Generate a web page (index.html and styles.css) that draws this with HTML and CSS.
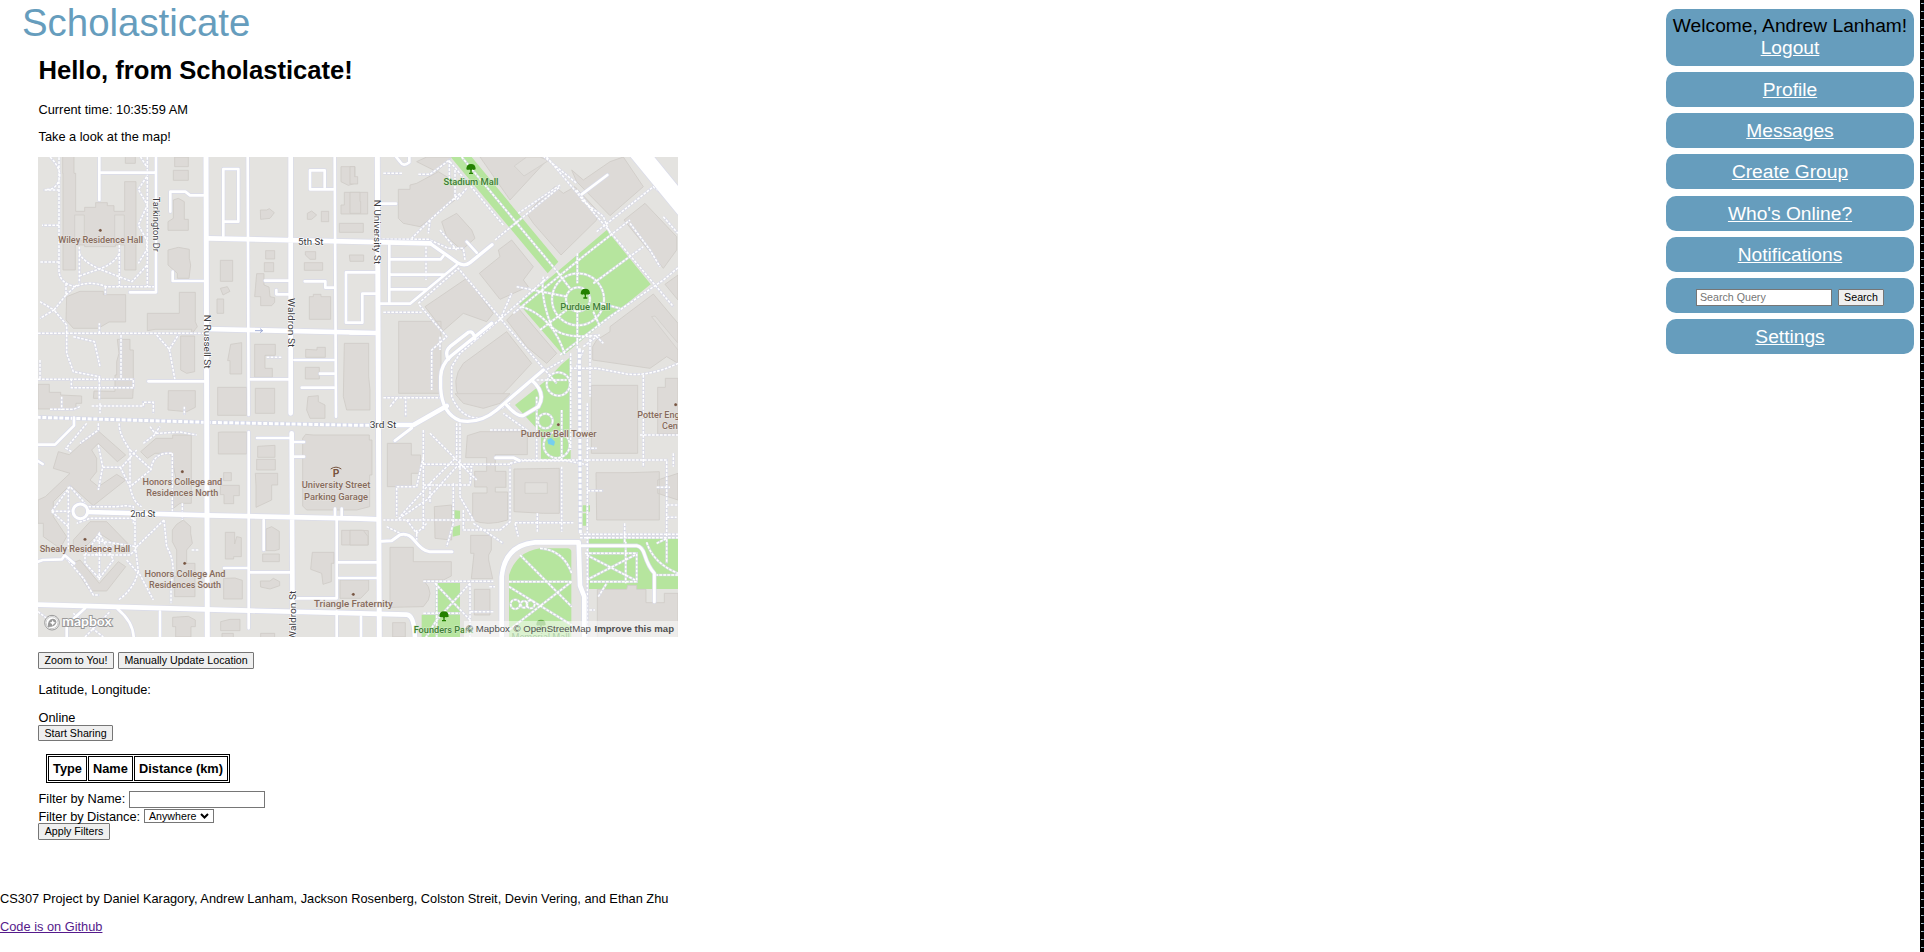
FILE: index.html
```html
<!DOCTYPE html>
<html lang="en">
<head>
<meta charset="utf-8">
<title>Scholasticate</title>
<link rel="stylesheet" href="styles.css">
</head>
<body>
<div class="page">
<main class="content">
<header class="brand">Scholasticate</header>
<section class="home">
<h1>Hello, from Scholasticate!</h1>
<p class="clock">Current time: 10:35:59 AM</p>
<p class="lead">Take a look at the map!</p>
<div class="map">
<svg class="map-canvas" viewBox="24 21 1920 1440" width="640" height="480">
<defs>
<g id="roads">
<path style="--w:15px" d="M528 10L532 1475M1042 10L1048 1475"/>
<path style="--w:14px" d="M782 10V790M785 850L788 1475M535 265L1200 280M528 537L1042 549M175 1086L535 1096L990 1106L1045 1108M20 1364L660 1382L990 1390L1130 1394Q1155 1396 1155 1475"/>
<path style="--w:8px" d="M653 10L656 795M656 846V1435M914 10L918 800M920 1110V1345H795M920 1385V1475"/>
<path style="--w:8px" d="M208 10V150M214 68H374M378 10V427H300M421 185V125H466L480 136H520M428 365V393H520M580 258V57H625V215H580M910 118H840V61H884V112M705 392H778M776 433H739V420M824 394H886V413H912M355 694H525M661 688H778M793 630H912M870 671H912M815 713H912M948 518V367H1042M948 518H997V431H1042M960 550H1042"/>
<path style="--w:8px" d="M1090 10L1110 35Q1120 52 1138 37V10M1052 161H1098M1078 285V457M1050 461H1140L1280 345M1083 328H1232L1240 318M1083 374H1240M1083 418H1190M1310 275L1340 308M1655 133L1732 75"/>
<path style="--w:10px" d="M1200 280L1285 340Q1305 350 1320 338L1386 284M1385 520L1263 618Q1233 645 1232 680V715Q1236 790 1290 812Q1350 822 1400 780L1540 660M1255 628Q1243 605 1260 590L1315 547Q1330 540 1335 567M1505 690Q1550 730 1525 770L1480 797Q1460 800 1430 765"/>
<path style="--w:8px" d="M24 884H75L132 827V803M24 933L38 942M24 1235L38 1230L96 1228L104 1216L132 1240M681 864H782M793 876H822M793 920H822M701 1110V1200M582 1254H655M661 1267H780M924 1237H1040M924 1284H1040M915 1076V1100M935 1076V1100M165 1375L110 1425V1461M263 1377Q315 1420 311 1475M390 1385V1475M993 1400V1475"/>
<path style="--w:14px" d="M1080 825H1150L1250 768M1642 1177H1515Q1425 1185 1415 1280V1475M1646 1177L1650 1307L1663 1340V1475"/>
<path style="--w:9px" d="M1095 872L1145 834M1056 1174L1085 1172L1110 1154Q1135 1148 1152 1170Q1180 1206 1200 1205H1266M1397 923H1450L1468 932M1655 1187H1820Q1837 1190 1844 1215Q1855 1250 1873 1270V1355"/>
<path style="--w:55px" d="M1812 -10L1980 195"/>
</g>
<g id="walks">
<path d="M87 10V365Q90 400 135 410Q180 390 228 410H376M88 120H40M87 226H36M87 336H30M60 21Q100 60 85 95Q75 120 50 118M352 21V410M325 10L350 50M350 80L325 118L352 165L325 225L350 270V300L325 340M148 290V400M268 285V410M148 310Q160 335 208 357L306 395L352 345M148 378L208 357Q255 340 268 310M30 455L72 480L30 505M108 400V435L72 480L110 525V610L130 665L208 680V750M108 435L140 405M226 410V435M24 550H525M208 550V520M130 560L193 575L210 650M273 555V685M24 688H310V713H124V690M380 555L418 598L445 555M418 598L435 690M30 630V690M710 622H755"/>
<path d="M60 778H130L150 770M185 768H340V757H370V790M210 760V790M95 740V780M463 770V795M170 820L108 895L125 905M205 820V840L150 880M268 820Q265 850 300 900V1010Q310 1060 335 1070M360 830L375 850L390 830M340 880L380 850L450 846L500 855M205 885L218 950L205 1020M218 952H275L320 900M425 910Q370 905 362 960L300 1010L270 950M300 900L365 960M427 910V1090M115 1010V1200M65 1084L120 1010L165 1060M65 1084H125M65 1084L115 1130M175 1070H260Q290 1065 310 1070V1120M310 1105H180L140 1120M315 1105V1180L325 1265L370 1350M325 1265Q310 1320 265 1350M402 1110L320 1190L190 1170M402 1110L410 1190Q440 1240 423 1300V1360M457 1060V1110M100 1215L160 1285L190 1335H208M208 1150V1290M160 1215H300L320 1195M165 1220V1240L208 1285L250 1230L208 1150L165 1215M195 1215L250 1185M290 1230L325 1270M24 1385L70 1420M165 1461L240 1385M130 1390L220 1461M485 1200H505"/>
<path d="M1060 70H1116M1165 73H1200L1245 40L1258 30V90M1260 35L1420 225M1290 130L1200 210L1145 265M1275 60V150M1045 268H1195L1255 295H1300L1305 330M1200 210L1195 250M1230 240L1280 300M1310 115L1280 150M1395 270L1590 110M1295 21L1590 375M1550 21L1930 470M1530 10L1640 100M1655 150L1720 200L1740 250M1590 105L1465 190M1700 245L1870 110L1920 150M1640 120L1690 185M1900 200L1944 250M1555 380L1410 508M1165 460L1285 355L1440 540L1580 700M1168 465L1250 560L1205 600V720M1060 487H1175M1230 560V600M1188 290V390M1410 508L1290 610L1265 650V740Q1300 820 1370 800L1440 760M1410 510L1445 430M1450 490L1665 315L1800 210M1475 470Q1570 500 1605 615M1460 410L1610 440M1590 615L1740 500L1900 390L1960 340M1642 310V400M1642 480V600M1690 400L1840 290M1710 460L1770 475M1690 485L1710 530M1540 380Q1530 440 1565 530Q1600 570 1710 555M1530 540L1610 480M1585 370L1620 415M1680 555V740M1660 600L1640 650M1620 655H1700L1790 672Q1860 680 1944 640M1840 675V950M1622 610V900M1530 670L1600 630M1520 690H1610M1660 590L1700 560L1720 580M1800 220L1860 300L1890 350"/>
<path d="M1060 743H1240M1127 740V800M1080 770L1100 745M1180 840V1140M1200 850L1340 990M1180 920L1160 1010H1100V1100M1180 1005H1320L1325 950H1280L1190 1050L1100 1110M1280 820V920L1200 1000L1110 1100M1290 820V1040L1330 1110H1060M1180 943H1380L1445 943M1200 1000V1060M1270 1000V1120L1250 1190M1130 1110L1160 1150L1190 1120M1070 1130L1130 1160M1160 1140V1185M1180 1294H1390M1300 1080V1140H1410L1440 1115V1000V950M1330 1120L1420 1180M1455 1118H1630M1455 1120L1465 1160M1522 1090V1145M1595 950V1145M1440 940L1475 932H1610L1675 945M1470 930H1910V1160M1595 780V930M1520 830V930H1550M1380 840H1490L1420 790M1520 740V840M1672 760V1150M1672 1022H1720M1672 895H1700M1784 1120V1180M1650 1153H1944M1650 1163H1944M1672 1160V1475M1910 1065H1944M1880 1012H1920M1910 1102H1940M1830 855H1944M1930 910V950M1320 1300V1475M1215 1300L1320 1410M1320 1300L1220 1410L1180 1475M1180 1390H1290M1220 1300V1460M1322 1385H1390M1378 1310H1395"/>
<path d="M1437 1295H1625M1470 1215L1625 1370M1625 1295L1437 1440M1530 1195Q1600 1200 1625 1270M1437 1310L1625 1425M1665 1210H1820V1295H1680M1670 1215L1815 1290M1670 1290L1815 1215M1787 1175V1300M1850 1177Q1870 1240 1944 1270M1880 1180L1910 1165V1240M1944 1275H1870M1678 1380H1695M1705 1340L1730 1300"/>
<ellipse cx="1644" cy="448" rx="78" ry="78"/><circle cx="1644" cy="448" r="36"/><circle cx="1585" cy="702" r="35"/><circle cx="1546" cy="813" r="22"/><circle cx="1580" cy="885" r="39"/><circle cx="1456" cy="1363" r="14"/><circle cx="1482" cy="1363" r="10"/><circle cx="1502" cy="1363" r="12"/>
</g>
<g id="tree"><path d="M-14 2Q-14-14 0-14Q14-14 14 2L8 4Q4 1 2 5V12H6V16H-6V12H-2V5Q-5 1-9 4Z"/></g>
</defs>
<rect class="land" x="24" y="21" width="1920" height="1440"/>
<g class="park">
<path d="M1262 21H1325L1585 335L1553 370ZM1730 240L1862 403L1600 616L1467 462ZM1595 643L1622 620V927H1533V850L1455 765L1550 690Z"/>
<path d="M1268 1080L1290 1082V1110L1268 1105ZM1268 1132L1290 1125V1155L1268 1160ZM1658 1066H1680V1085H1658ZM1658 1090H1674V1127H1658ZM1218 1299H1290V1390V1475H1175V1394H1216ZM1437 1475V1275Q1460 1205 1530 1195H1614Q1624 1197 1624 1205V1475ZM1677 1163H1944V1317H1677Z"/>
</g>
<g class="building">
<path d="M98 10H132V70H137V184H164V172H197V158H232V167H252V184H284V95H318V360H284V285H256V290H164V285H136V360H99V70H98ZM286 10H316V40H286ZM434 21H475V50H434ZM430 61H475V91H430ZM430 150L445 145L463 155V208H475V241H414V215L430 205ZM414 300L445 292L478 298V325L482 345L477 385H442V370L414 345ZM110 440L150 424H220V434H287V516H237L205 535H130L108 510ZM352 490H448V427H496V515L502 530L485 552V538H375L352 542ZM452 558H494V665L470 670L452 660ZM262 568H300V600H310V710L308 745H190L192 723L255 724V675H260V635L267 610ZM24 703H58V727H92V735L155 738V760H138V777H24Z"/>
<path d="M691 180H710L718 176L733 188L720 205L692 208ZM832 190L845 183L860 195L845 208H832ZM874 184H896V215H874ZM933 50H975V100L955 106L933 95ZM943 127H1013V192H933V165H943ZM928 220H1000V247H928ZM707 302H734V327H707ZM703 338H731V365H703ZM826 305H857V328H840L826 315ZM823 338H878V361H823ZM571 331H608V394H571ZM571 415L592 410L600 424L579 435ZM561 447H581V490H561ZM680 371H702V405L717 411L720 440L734 443V457L725 467H692V440H674ZM850 440V433H873V440H902V508H838V440ZM958 315H1001V334H960ZM943 580H1016V680L1020 720V780H950L940 740ZM602 583L635 578V672H600V632H593ZM674 583H736V616H705V655H727V682H674ZM827 598L861 600V592H886V622H827ZM826 652H868V687H826ZM563 712H650V796H563ZM676 715H734V790H676ZM415 722H496V772L470 785L414 780ZM834 740L865 737V755L885 765V805H840L830 780Z"/>
<path d="M565 847L575 846H650V912H565ZM683 889L735 886V922H683ZM680 928H736V960H680ZM676 970H743V1005H725V1050L678 1072V1008ZM581 968H604V992H581ZM571 1006H628V1037H611V1061H582V1034H571ZM827 853L850 855H1018V870H1026V975H1019V1070L980 1080H830L818 1068V865ZM46 1040L120 970L70 955L85 905L118 914L155 880L205 843L287 915L262 935L205 880L185 900L200 925V965L180 990L205 1010L260 973L287 990L190 1067L120 1005L70 1055V1100L110 1160L90 1195L40 1160V1120H24V1050ZM332 905L378 865H428V855H484V1060H450L430 1075V1015L440 995L422 910H375L352 925ZM130 1170L180 1115H230L293 1180L270 1190L208 1150L150 1205L130 1195ZM125 1240L150 1230L208 1300L265 1235L287 1250L230 1323H180ZM440 1123L460 1110L482 1130V1150L487 1180L470 1200V1240H495V1340H434V1280H440V1200L427 1175V1140Z"/>
<path d="M586 1147H614V1182L620 1160L634 1163V1220H611V1227H586ZM708 1137L725 1130L748 1144V1198L734 1202H708ZM698 1212H748V1235H698ZM847 1207H912V1240H904V1295L879 1303L875 1270L842 1258ZM581 1285L615 1284L637 1291V1347H581ZM691 1293H720L730 1285L749 1295V1307L720 1317L692 1311ZM572 1415L600 1408H630V1442H572ZM428 1402L475 1399L496 1410V1430H483V1461H437V1430H428ZM935 1141H990L1015 1142V1185H935ZM930 1290L978 1290H1016V1320L992 1345H930ZM576 1450H610V1470H576ZM692 1450H734V1470H692Z"/>
<path d="M960 50H974V80H983V102H960ZM960 127H990V155H992V190H960ZM1105 118H1140V105L1160 100L1225 65L1275 95V150L1170 230L1120 220L1105 205ZM1160 35L1190 21H1265L1220 65ZM1235 215L1280 190L1325 240L1335 265L1295 300L1250 260ZM1404 10H1530L1553 28L1440 150L1350 21ZM1490 190L1520 160L1575 110L1600 130L1635 110L1700 180V210L1593 315L1510 220ZM1625 60L1660 90L1740 35L1780 21L1840 110L1740 197L1640 95ZM1782 210L1845 160L1940 260V300L1900 355ZM1348 370L1410 320L1405 300L1445 270L1510 350L1480 390L1495 410L1410 448ZM1185 470L1310 385L1390 490L1370 515L1300 490L1240 542ZM1106 514H1233V730H1106ZM1300 640L1430 545L1505 640L1440 710L1400 750H1290Q1260 690 1300 640ZM1430 510L1465 475L1580 610L1550 640L1490 590ZM1688 590L1700 570L1740 545V530L1870 432L1944 520V640L1910 620L1860 655L1688 630ZM1684 706H1823V910H1684ZM1883 712H1906V685H1944V852H1883ZM1905 403L1944 375V450Z"/>
<path d="M1275 731H1440L1410 760L1360 775L1300 760ZM1072 880H1144V915H1172V970H1144V1010H1072ZM1312 857L1350 845H1384V845H1492V914H1396V964H1428V1012H1396V1026H1433V1110Q1370 1130 1328 1110V1029H1371V1011H1334V964H1370V923H1307ZM1452 957L1588 955V1090H1540L1452 1085ZM1698 968L1800 968L1888 965V1110H1700ZM1213 1070L1265 1065V1170L1215 1165ZM1080 1192H1150V1235H1264V1278L1240 1290H1180Q1220 1330 1180 1370L1080 1372ZM1322 1156H1384V1200L1376 1215V1230L1388 1286H1324L1332 1210H1322ZM1333 1318H1380V1395H1333ZM1702 1318H1790L1793 1306H1820V1318H1848V1358H1903V1330H1944V1475H1702ZM960 1141H1000L1014 1160V1185H960ZM1088 1418H1126V1461H1088ZM1883 990L1944 970V1050L1883 1030Z"/>
</g>
<g class="building-hole"><path d="M134 195H163V272H134ZM254 195H283V272H254ZM1485 998H1552V1030H1485ZM1865 500L1875 498L1944 580V600ZM1453 48L1482 78L1555 32L1530 21H1490Z"/></g>
<use class="walk-edge" href="#walks"/><use class="walk" href="#walks"/>
<g class="mall"><path d="M20 802L530 817L990 826L1060 825M1648 595L1651 1150"/></g>
<g class="mall-dash"><path d="M20 802L530 817L990 826L1060 825M1648 595L1651 1150"/></g>
<g class="road-edge"><use href="#roads"/><circle style="--w:9px" cx="151" cy="1084" r="22"/></g>
<g class="road"><use href="#roads"/><circle style="--w:9px" cx="151" cy="1084" r="22"/></g>
<path class="arrow" d="M675 542H698M690 536L698 542L690 548"/>
<path class="pond" d="M1552 870L1563 863L1575 875L1572 887L1555 882Z"/>
<g class="dots"><circle cx="211" cy="241" r="5"/><circle cx="457" cy="965" r="5"/><circle cx="165" cy="1168" r="5"/><circle cx="464" cy="1240" r="5"/><circle cx="970" cy="1333" r="5"/><circle cx="1585" cy="824" r="5"/><circle cx="1937" cy="764" r="5"/></g>
<g class="trees"><use href="#tree" x="1323" y="56"/><use href="#tree" x="1666" y="430"/><use href="#tree" x="1242" y="1398"/><use href="#tree" x="1533" y="1423" opacity=".5"/></g>
<g class="place">
<text x="212" y="279" textLength="255" lengthAdjust="spacingAndGlyphs">Wiley Residence Hall</text>
<text x="457" y="1004" textLength="239" lengthAdjust="spacingAndGlyphs">Honors College and</text><text x="457" y="1038" textLength="216" lengthAdjust="spacingAndGlyphs">Residences North</text>
<text x="165" y="1207" textLength="271" lengthAdjust="spacingAndGlyphs">Shealy Residence Hall</text>
<text x="465" y="1280" textLength="243" lengthAdjust="spacingAndGlyphs">Honors College And</text><text x="465" y="1313" textLength="216" lengthAdjust="spacingAndGlyphs">Residences South</text>
<text x="918" y="1015" textLength="206" lengthAdjust="spacingAndGlyphs">University Street</text><text x="918" y="1049" textLength="192" lengthAdjust="spacingAndGlyphs">Parking Garage</text>
<text x="970" y="1371" textLength="236" lengthAdjust="spacingAndGlyphs">Triangle Fraternity</text>
<text x="1586" y="862" textLength="228" lengthAdjust="spacingAndGlyphs">Purdue Bell Tower</text>
<text class="from-start" x="1822" y="803">Potter Engineering</text><text class="from-start" x="1896" y="837">Center</text>
</g>
<text class="parking" x="918" y="980">P</text><path class="parking-roof" d="M902 957Q918 946 934 957"/>
<g class="green">
<text x="1323" y="105" textLength="165" lengthAdjust="spacingAndGlyphs">Stadium Mall</text><text x="1666" y="479" textLength="151" lengthAdjust="spacingAndGlyphs">Purdue Mall</text><text x="1240" y="1448" textLength="178" lengthAdjust="spacingAndGlyphs">Founders Park</text><text x="1532" y="1471" textLength="175" lengthAdjust="spacingAndGlyphs" opacity=".6">Memorial Mall</text>
</g>
<g class="street">
<text x="842" y="284" textLength="76" lengthAdjust="spacingAndGlyphs">5th St</text><text x="339" y="1101" textLength="75" lengthAdjust="spacingAndGlyphs">2nd St</text><text x="1059" y="834" textLength="80" lengthAdjust="spacingAndGlyphs">3rd St</text>
<text transform="translate(368 223) rotate(90)" textLength="165" lengthAdjust="spacingAndGlyphs">Tarkington Dr</text>
<text transform="translate(521 575) rotate(90)" textLength="161" lengthAdjust="spacingAndGlyphs">N Russell St</text>
<text transform="translate(775 518) rotate(90)" textLength="148" lengthAdjust="spacingAndGlyphs">Waldron St</text>
<text transform="translate(1033 246) rotate(90)" textLength="193" lengthAdjust="spacingAndGlyphs">N University St</text>
<text transform="translate(797 1396) rotate(-90)" textLength="148" lengthAdjust="spacingAndGlyphs">Waldron St</text>
</g>
<g class="logo"><circle class="logo-ring" cx="66" cy="1418" r="22"/><circle class="logo-disc" cx="66" cy="1418" r="18"/><path class="logo-pin" d="M54 1431Q52 1408 68 1406Q79 1406 79 1417Q78 1431 54 1431Z"/><path class="logo-star" d="M68 1410L71 1416L77 1418L71 1421L68 1427L65 1421L59 1418L65 1416Z"/>
<text x="97" y="1429" textLength="148" lengthAdjust="spacingAndGlyphs">mapbox</text></g>
</svg>
<div class="attribution"><span>© Mapbox</span><span>© OpenStreetMap</span><b>Improve this map</b></div>
</div>
<div class="map-actions"><button class="zoom-button">Zoom to You!</button><button class="locate-button">Manually Update Location</button></div>
<p class="position">Latitude, Longitude:</p>
<div class="online">Online</div>
<button class="share-button">Start Sharing</button>
<table class="people"><tr><th>Type</th><th>Name</th><th>Distance (km)</th></tr></table>
<div class="filter-name"><label>Filter by Name:</label><input type="text"></div>
<div class="filter-distance"><label>Filter by Distance:</label><span class="select">Anywhere<svg width="9" height="6" viewBox="0 0 9 6"><path d="M1 1L4.500 4.500L8 1"/></svg></span></div>
<button class="apply-button">Apply Filters</button>
</section>
<footer><p>CS307 Project by Daniel Karagory, Andrew Lanham, Jackson Rosenberg, Colston Streit, Devin Vering, and Ethan Zhu</p><p><a href="#">Code is on Github</a></p></footer>
</main>
<nav class="sidebar">
<div class="card welcome">Welcome, Andrew Lanham!<br><a href="#">Logout</a></div>
<div class="card"><a href="#">Profile</a></div>
<div class="card"><a href="#">Messages</a></div>
<div class="card"><a href="#">Create Group</a></div>
<div class="card"><a href="#">Who's Online?</a></div>
<div class="card"><a href="#">Notifications</a></div>
<div class="card search"><input type="text" placeholder="Search Query"><button>Search</button></div>
<div class="card"><a href="#">Settings</a></div>
</nav>
<div class="edge"></div>
</div>
</body>
</html>
```
FILE: styles.css
```css
* { box-sizing: border-box; }
body { margin: 0; background: #fff; color: #000; font: 12.8px/15px "Liberation Sans", Arial, sans-serif; overflow: hidden; }
.page { display: flex; height: 952px; }
.content { flex: 1; }
.brand { height: 54px; padding-left: 22px; font-size: 38.4px; line-height: 46px; color: #669dbd; }
.home { padding-left: 38px; }
h1 { margin: 0; height: 48px; padding-left: .5px; font-size: 25.6px; line-height: 32px; }
p { margin: 0; }
.clock, .lead, .position, .online { padding-left: .5px; }
.clock { height: 27px; }
.lead { height: 28px; }
.map { position: relative; width: 640px; height: 480px; overflow: hidden; font-family: Roboto, sans-serif; }
.map-canvas { display: block; }
.land { fill: #e4e3e0; }
.park { fill: #b6e59e; }
.building { fill: #dddad7; stroke: #cfcbc7; stroke-width: 2.5; }
.building-hole { fill: #e1dfdc; stroke: #cfcbc7; stroke-width: 2; }
.walk-edge { fill: none; stroke: #d9dae8; stroke-width: 8; opacity: .85; }
.walk { fill: none; stroke: #fff; stroke-width: 4.500; stroke-dasharray: 8 4; }
.mall { fill: none; stroke: #d5d8e8; stroke-width: 12; }
.mall-dash { fill: none; stroke: #fff; stroke-width: 9; stroke-dasharray: 12 5; }
.road-edge, .road { fill: none; stroke-linecap: round; stroke-linejoin: round; }
.road-edge { stroke: #d9dbea; --edge: 4px; }
.road { stroke: #fff; --edge: 0px; }
.road-edge circle, .road circle, #roads path { stroke-width: calc(var(--w) + var(--edge)); }
.arrow { fill: none; stroke: #8f9dcc; stroke-width: 2.500; }
.pond { fill: #75cff0; }
.dots { fill: #765440; stroke: #eee; stroke-width: 1; }
.trees { fill: #238000; }
.map text { font-family: Roboto, sans-serif; font-size: 29px; font-weight: 500; text-anchor: middle; paint-order: stroke; stroke: #e9e6e3; stroke-width: 3px; }
.place text { fill: #866b5c; }
.map .place .from-start { text-anchor: start; font-size: 27px; }
.map .parking { fill: #765440; font-size: 31px; font-weight: 700; }
.parking-roof { fill: none; stroke: #765440; stroke-width: 3; }
.green text { fill: #3d7d35; stroke: #d4edc6; }
.map .street text { fill: #3b3b40; stroke: #fff; font-weight: 400; }
.logo-ring { fill: #fff; stroke: #999; stroke-width: 3; }
.logo-disc { fill: #fff; stroke: #aaa; stroke-width: 2; }
.logo-pin { fill: #999; }
.logo-star { fill: #fff; }
.map .logo text { fill: #fff; stroke: #999; stroke-width: 6px; text-anchor: start; font-family: Lato, sans-serif; font-size: 41px; font-weight: 700; }
.attribution { position: absolute; right: 0; bottom: 0; display: flex; width: 214px; height: 16px; padding: 0 4px 0 2px; justify-content: space-between; background: rgba(255,255,255,.5); color: #505050; font: 9.600px/16px "Liberation Sans", Arial, sans-serif; white-space: nowrap; }
button, input { font: 10.667px/13px "Liberation Sans", Arial, sans-serif; margin: 0; color: #000; }
button { display: block; padding: 0; height: 17px; border: 1px solid #767676; border-radius: 1px; background: #efefef; text-align: center; white-space: nowrap; }
input { height: 17px; border: 1px solid #767676; padding: 1px 3px; background: #fff; border-radius: 0; }
.map-actions { display: flex; gap: 4px; padding-top: 15px; height: 45px; }
.zoom-button { width: 76px; }
.locate-button { width: 136px; }
.position { height: 28px; }
.online { height: 15px; }
.share-button { width: 75px; height: 16px; }
.people { margin: 13px 0 8px 8px; width: 184px; height: 29px; border: 1px solid #000; border-spacing: 1px; }
.people th { border: 1px solid #000; padding: 0 4px; height: 25px; font-size: 12.8px; white-space: nowrap; }
.filter-name, .filter-distance { display: flex; gap: 4px; }
.filter-name { height: 18px; }
.filter-name input { width: 136px; }
label { flex: none; padding-left: .5px; white-space: nowrap; }
.filter-name label { width: 87px; }
.filter-distance { height: 14px; }
.filter-distance label { width: 102px; letter-spacing: -.05px; }
.select { display: flex; align-items: center; gap: 4px; width: 70px; height: 14px; border: 1px solid #767676; padding-left: 4px; font-size: 10.667px; line-height: 12px; background: #fff; }
.select path { fill: none; stroke: #000; stroke-width: 2; }
.apply-button { width: 72px; }
footer { padding-top: 51px; }
footer p { height: 28px; }
footer a { color: #551a8b; }
.sidebar { width: 248px; margin: 9px 6px 0 0; font-size: 19.2px; line-height: 22px; text-align: center; }
.card { height: 35px; margin-bottom: 6.15px; padding-top: 7px; border-radius: 10px; background: #669dbd; white-space: nowrap; }
.card a { color: #fff; }
.welcome { height: 57px; padding-top: 6px; }
.search { display: flex; justify-content: center; gap: 6px; padding-top: 11px; }
.search input { width: 136px; }
.search input::placeholder { color: #757575; }
.search button { width: 46px; }
.edge { width: 4px; height: 952px; background: repeating-linear-gradient(#000 0 3px, transparent 3px 4px, #000 4px 8px), linear-gradient(90deg, #000 0 1px, #aebbb9 1px 3px, #5b87af 3px); }
```
